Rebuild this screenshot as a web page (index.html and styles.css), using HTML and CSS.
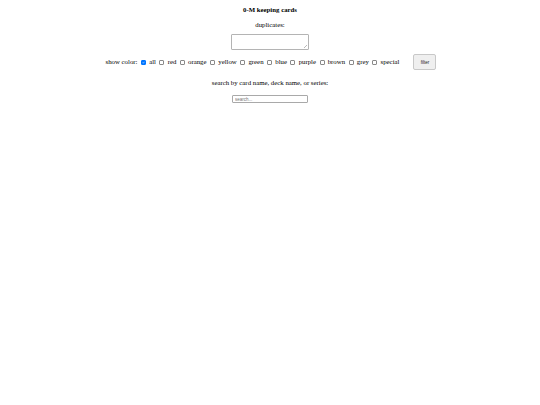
FILE: index.html
```html
<!DOCTYPE html>
<html>
<head>
<meta charset="utf-8">
<link rel="stylesheet" href="styles.css">
</head>
<body>
<div class="page">
  <div class="title">0-M keeping cards</div>
  <div class="label">duplicates:</div>
  <textarea class="dupes"></textarea>
  <div class="filters">
    <span class="colors">show color: <input type="checkbox" class="cb" checked> all <input type="checkbox" class="cb"> red <input type="checkbox" class="cb"> orange <input type="checkbox" class="cb"> yellow <input type="checkbox" class="cb"> green <input type="checkbox" class="cb"> blue <input type="checkbox" class="cb"> purple <input type="checkbox" class="cb"> brown <input type="checkbox" class="cb"> grey <input type="checkbox" class="cb"> special</span>
    <button class="filter-btn">filter</button>
  </div>
  <div class="label search-label">search by card name, deck name, or series:</div>
  <input type="text" class="search" placeholder="search...">
</div>
</body>
</html>
```
FILE: styles.css
```css
html, body {
  margin: 0;
  padding: 0;
  background: #fff;
}
body {
  font-family: "Liberation Serif", "Times New Roman", serif;
  font-size: 6.8px;
  color: #000;
}
.page {
  display: flex;
  flex-direction: column;
  align-items: center;
  padding-top: 6px;
}
.title {
  font-weight: bold;
  line-height: 8px;
}
.label {
  margin-top: 7px;
  line-height: 8px;
}
.dupes {
  margin-top: 5px;
  width: 78px;
  height: 16px;
  box-sizing: border-box;
  border: 1px solid #b4b4b4;
  border-radius: 1px;
  padding: 0;
  resize: none;
  font-size: 6.8px;
  background:
    linear-gradient(135deg, transparent 0 60%, #bbb 60% 68%, transparent 68% 78%, #bbb 78% 86%, transparent 86%) no-repeat right 1px bottom 1px / 4px 4px,
    #fff;
}
.filters {
  margin-top: 4px;
  margin-left: 2px;
  display: flex;
  align-items: center;
  gap: 14px;
}
.colors {
  white-space: nowrap;
  line-height: 8px;
}
.cb {
  -webkit-appearance: none;
  appearance: none;
  display: inline-block;
  box-sizing: border-box;
  width: 5px;
  height: 5px;
  margin: 0 1.5px 0 1.8px;
  border: 0.6px solid #8a8a8a;
  border-radius: 1px;
  background: #fff;
  vertical-align: -0.5px;
}
.cb:checked {
  border-color: #0075ff;
  background: #0075ff url("data:image/svg+xml,%3Csvg xmlns='http://www.w3.org/2000/svg' viewBox='0 0 10 10'%3E%3Cpath d='M2 5.2 L4.2 7.3 L8 2.8' fill='none' stroke='white' stroke-width='1.8'/%3E%3C/svg%3E") center / 100% 100% no-repeat;
}
.filter-btn {
  width: 23px;
  height: 16px;
  padding: 0;
  font-family: "Liberation Sans", Arial, sans-serif;
  font-size: 4.5px;
  background: #efefef;
  border: 1px solid #c8c8c8;
  border-radius: 2px;
  color: #222;
}
.search-label {
  margin-top: 9px;
}
.search {
  margin-top: 8px;
  width: 76px;
  height: 8px;
  box-sizing: border-box;
  border: 1px solid #a9a9a9;
  border-radius: 1px;
  padding: 0 2px;
  font-family: "Liberation Sans", Arial, sans-serif;
  font-size: 4.5px;
}
.search::placeholder {
  color: #757575;
}
```
